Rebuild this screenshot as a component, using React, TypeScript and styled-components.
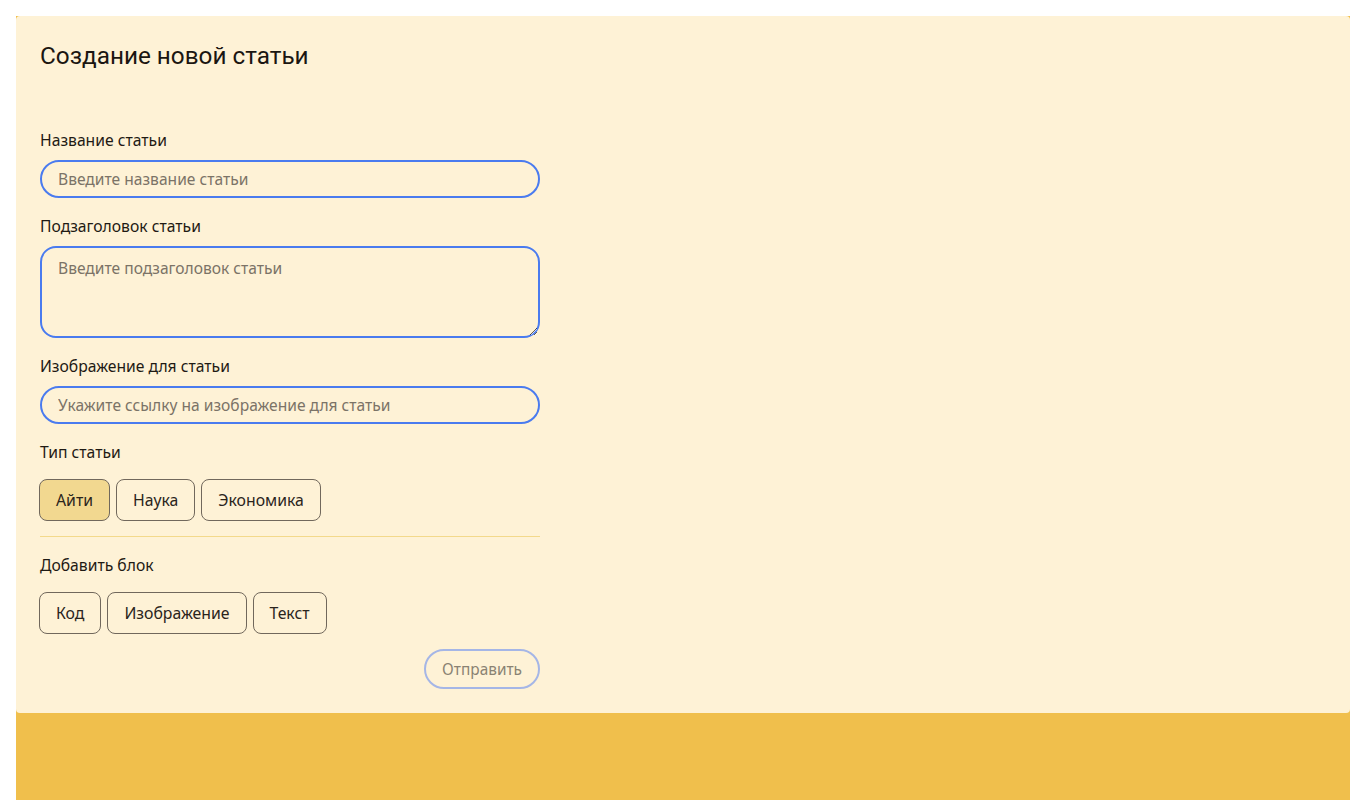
import styled, {createGlobalStyle} from "styled-components";

const GlobalStyle = createGlobalStyle`
  html, body {
    margin: 0;
    padding: 0;
    background: #ffffff;
  }

  body {
    padding: 16px 16px 0;
    font-family: "Noto Sans", "Open Sans", sans-serif;
    color: #1f1a14;
  }

  * {
    box-sizing: border-box;
  }
`

const typeOptions = ['Айти', 'Наука', 'Экономика']
const blockOptions = ['Код', 'Изображение', 'Текст']

export default function App(): JSX.Element {
  return (
    <>
      <GlobalStyle/>
      <Page>
        <Card>
          <Title>Создание новой статьи</Title>
          <Form>
            <Field>
              <Label>Название статьи</Label>
              <Input placeholder="Введите название статьи"/>
            </Field>
            <Field>
              <Label>Подзаголовок статьи</Label>
              <TextArea placeholder="Введите подзаголовок статьи"/>
            </Field>
            <Field>
              <Label>Изображение для статьи</Label>
              <Input placeholder="Укажите ссылку на изображение для статьи"/>
            </Field>
            <Group>
              <Label>Тип статьи</Label>
              <Chips>
                {typeOptions.map((t, i) => (
                  <Chip key={t} $active={i === 0}>{t}</Chip>
                ))}
              </Chips>
            </Group>
            <Divider/>
            <Group>
              <Label>Добавить блок</Label>
              <Chips>
                {blockOptions.map(t => (
                  <Chip key={t}>{t}</Chip>
                ))}
              </Chips>
            </Group>
            <Footer>
              <SubmitButton disabled>Отправить</SubmitButton>
            </Footer>
          </Form>
        </Card>
      </Page>
    </>
  )
}

const Page = styled.div`
  min-height: 784px;
  background: #f0bf4c;
`

const Card = styled.div`
  background: #fef2d6;
  border-radius: 4px;
  padding: 24px 24px 24px;
`

const Title = styled.h1`
  margin: 0;
  font-family: Roboto, "Liberation Sans", sans-serif;
  font-weight: 400;
  font-size: 24.3px;
  line-height: 32px;
  color: #1b1611;
`

const Form = styled.div`
  width: 500px;
  margin-top: 58px;
  display: flex;
  flex-direction: column;
`

const Field = styled.div`
  display: flex;
  flex-direction: column;
  gap: 10px;
  margin-bottom: 18px;
`

const Group = styled.div`
  display: flex;
  flex-direction: column;
  gap: 17px;
`

const Label = styled.label`
  font-size: 15.7px;
  line-height: 20px;
  color: #1f1a14;
`

const fieldBase = `
  width: 100%;
  background: transparent;
  border: 2px solid #4a7bef;
  font-family: "Noto Sans", "Open Sans", sans-serif;
  font-size: 15.6px;
  color: #1f1a14;
  outline: none;

  &::placeholder {
    color: #7b7367;
  }
`

const Input = styled.input`
  ${fieldBase};
  height: 38px;
  border-radius: 19px;
  padding: 0 16px;
`

const TextArea = styled.textarea`
  ${fieldBase};
  height: 92px;
  border-radius: 16px;
  padding: 10px 16px;
  line-height: 20px;
  resize: vertical;
`

const Chips = styled.div`
  display: flex;
  gap: 6px;
  margin-left: -1px;
`

const Chip = styled.button<{ $active?: boolean }>`
  height: 42px;
  padding: 0 16px;
  border: 1px solid #71685c;
  border-radius: 8px;
  background: ${p => p.$active ? '#f2d890' : 'transparent'};
  font-family: "Noto Sans", "Open Sans", sans-serif;
  font-size: 15.8px;
  color: #2a241c;
  cursor: pointer;
`

const Divider = styled.hr`
  width: 100%;
  margin: 15px 0 18px;
  border: none;
  border-top: 1px solid #f3d98b;
`

const Footer = styled.div`
  display: flex;
  justify-content: flex-end;
  margin-top: 15px;
`

const SubmitButton = styled.button`
  height: 40px;
  padding: 0 16px;
  border: 2px solid #a5b6e6;
  border-radius: 20px;
  background: transparent;
  font-family: "Noto Sans", "Open Sans", sans-serif;
  font-size: 15.4px;
  color: #8a8273;
`
